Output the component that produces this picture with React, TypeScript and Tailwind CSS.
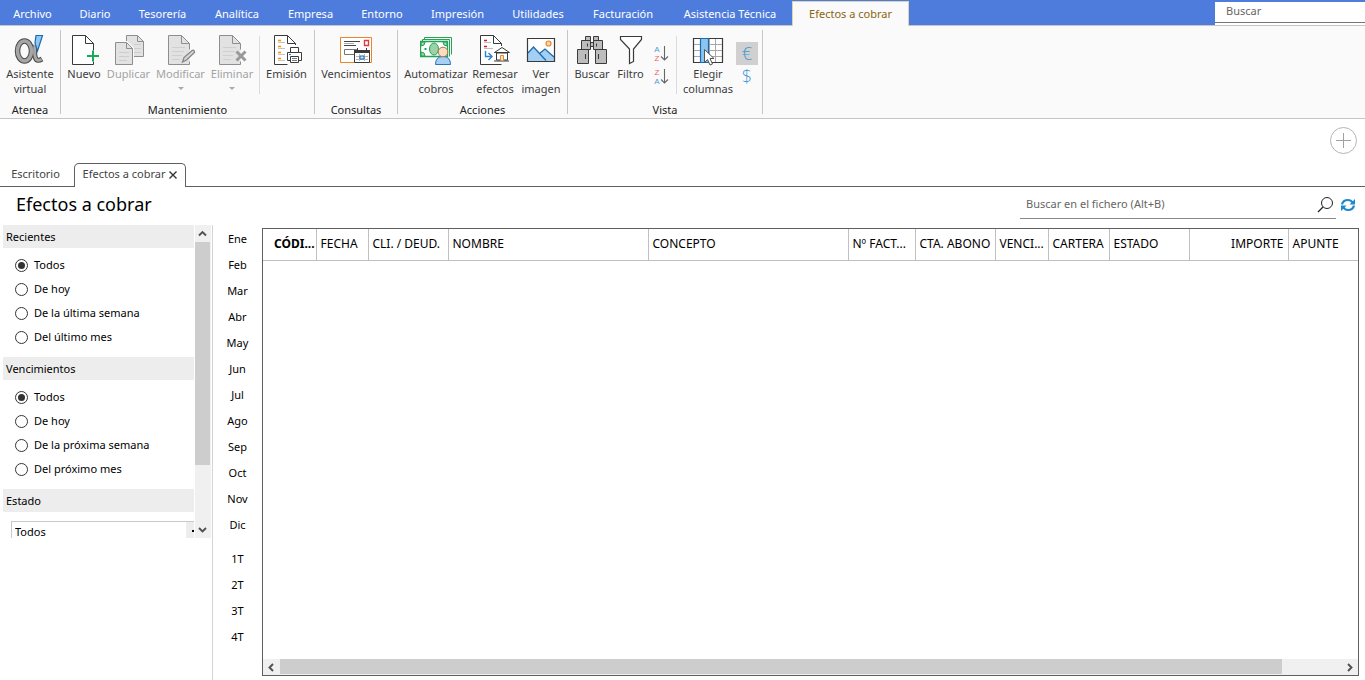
import { useState } from 'react'
import type { ReactNode } from 'react'
import { clsx } from 'clsx'

const menuTabs = [
  { label: 'Archivo', width: 'w-[65px]' },
  { label: 'Diario', width: 'w-[60px]' },
  { label: 'Tesorería', width: 'w-[75px]' },
  { label: 'Analítica', width: 'w-[74px]' },
  { label: 'Empresa', width: 'w-[73px]' },
  { label: 'Entorno', width: 'w-[70px]' },
  { label: 'Impresión', width: 'w-[81px]' },
  { label: 'Utilidades', width: 'w-[80px]' },
  { label: 'Facturación', width: 'w-[90px]' },
  { label: 'Asistencia Técnica', width: 'w-[124px]' },
  { label: 'Efectos a cobrar', width: 'w-[117px]' },
]

const months = ['Ene', 'Feb', 'Mar', 'Abr', 'May', 'Jun', 'Jul', 'Ago', 'Sep', 'Oct', 'Nov', 'Dic']
const quarters = ['1T', '2T', '3T', '4T']

const columns = [
  { label: 'CÓDI...', width: 'w-[53px]', style: 'pl-[11px] text-left font-bold' },
  { label: 'FECHA', width: 'w-[52px]', style: 'pl-1 text-left font-normal' },
  { label: 'CLI. / DEUD.', width: 'w-[80px]', style: 'pl-1 text-left font-normal' },
  { label: 'NOMBRE', width: 'w-[200px]', style: 'pl-1 text-left font-normal' },
  { label: 'CONCEPTO', width: 'w-[200px]', style: 'pl-1 text-left font-normal' },
  { label: 'Nº FACT...', width: 'w-[67px]', style: 'pl-1 text-left font-normal' },
  { label: 'CTA. ABONO', width: 'w-[80px]', style: 'pl-1 text-left font-normal' },
  { label: 'VENCI...', width: 'w-[53px]', style: 'pl-1 text-left font-normal' },
  { label: 'CARTERA', width: 'w-[61px]', style: 'pl-1 text-left font-normal' },
  { label: 'ESTADO', width: 'w-[80px]', style: 'pl-1 text-left font-normal' },
  { label: 'IMPORTE', width: 'w-[99px]', style: 'pr-1 text-right font-normal' },
  { label: 'APUNTE', width: '', style: 'pl-1 text-left font-normal' },
]

/* Ribbon icons, all on a 32x32 grid */

function Icon({ children }: { children: ReactNode }) {
  return (
    <svg viewBox="0 0 32 32" className="h-8 w-8 shrink-0" fill="none" aria-hidden="true">
      {children}
    </svg>
  )
}

function AteneaIcon() {
  return (
    <Icon>
      <g stroke="#4a4a4a">
        <ellipse cx="10.500" cy="17" rx="7" ry="10" strokeWidth="5.500" />
        <path d="M21 11q-1 9 .5 13t6.500 1" strokeWidth="5" />
      </g>
      <g stroke="#a6a6a6">
        <ellipse cx="10.500" cy="17" rx="7" ry="10" strokeWidth="3.500" />
        <path d="M21 11q-1 9 .5 13t6 1.200" strokeWidth="3" />
      </g>
      <path d="M22 1.500h6.500l-5 15.500-2.500-8z" fill="#8fc8f2" stroke="#1b6bb0" strokeWidth="1.200" />
    </Icon>
  )
}

function NewIcon() {
  return (
    <Icon>
      <path d="M25.5 16.5v-7l-8-8h-13v29h21v-3" fill="#fff" />
      <path d="M25.5 16.5v-7l-8-8h-13v29h21v-3M17.5 1.5v8h8" stroke="#3a3a3a" />
      <path d="M25 16.5v11M19 22h12" stroke="#1aaa55" strokeWidth="2" />
    </Icon>
  )
}

function DuplicateIcon() {
  return (
    <Icon>
      <path d="M13.500 1.500h11l6 6v15h-17z" fill="#e2e2e2" stroke="#8e8e8e" />
      <path d="M24.500 1.500v6h6" stroke="#8e8e8e" />
      <path d="M21 10.500h7M21 14.500h7M21 18.500h7" stroke="#cdcdcd" />
      <path d="M1 7h13l7 7v10H1z" fill="#fafafa" />
      <path d="M2.500 8.500h11l6 6v16h-17z" fill="#e2e2e2" stroke="#8e8e8e" />
      <path d="M13.500 8.500v6h6" stroke="#8e8e8e" />
      <path d="M6 18.500h10M6 22.500h10M6 26.500h8" stroke="#cdcdcd" />
    </Icon>
  )
}

function DisabledPage() {
  return (
    <>
      <path d="M3.500 1.500h13l8 8v21h-21z" fill="#e2e2e2" />
      <path d="M24.500 15.500v-6l-8-8h-13v29h21v-3M16.500 1.500v8h8" stroke="#8e8e8e" />
      <path d="M7 13.500h13M7 17.500h12M7 21.500h10M7 25.500h8" stroke="#cfcfcf" />
    </>
  )
}

function EditIcon() {
  return (
    <Icon>
      <DisabledPage />
      <path d="M17.500 28l1.500-4.500 8-7q2.500-1 2.500 2l-8 7.500z" fill="#d6d6d6" stroke="#858585" strokeWidth="1.300" />
    </Icon>
  )
}

function DeleteIcon() {
  return (
    <Icon>
      <DisabledPage />
      <path d="M20.500 17.500l9 9M29.500 17.500l-9 9" stroke="#999" strokeWidth="3" />
    </Icon>
  )
}

function PrintListIcon() {
  return (
    <Icon>
      <path d="M24.500 11V9.500l-8-8h-13v29h13M16.500 1.500v8h8" fill="#fff" stroke="#3a3a3a" />
      <path d="M7 6.500h3M7 12.500h3M7 18.500h3M7 24.500h3" stroke="#f29111" strokeWidth="1.500" />
      <path d="M7 8.500h7M7 14.500h7M7 20.500h7M7 26.500h7" stroke="#c4c4c4" />
      <path d="M16.500 18.500h14v8h-14z" fill="#fff" stroke="#3a3a3a" />
      <path d="M19.500 13.500h8v5h-8zM19.500 22.500h8v6h-8z" fill="#fff" stroke="#3a3a3a" />
      <path d="M21 24.500h5M21 26.500h5" stroke="#777" />
      <path d="M18 20.500h2" stroke="#1b7bd0" />
    </Icon>
  )
}

function DueIcon() {
  return (
    <Icon>
      <path d="M.5 3.500h31v25H.5z" fill="#fff" stroke="#e8862a" />
      <path d="M4 7.500h16M4 11.500h12" stroke="#444" strokeWidth="1.200" />
      <path d="M4 9.500h10" stroke="#aaa" />
      <path d="M24.500 6.500h4v5h-4z" stroke="#e23b3b" strokeWidth="1.400" />
      <path d="M4.500 15.500h12v5h-12z" stroke="#777" />
      <path d="M14.500 16.500h15v12h-15z" fill="#fff" stroke="#3a3a3a" />
      <path d="M14 16h16v3H14z" fill="#3a3a3a" />
      <path d="M17.500 14v3M26.500 14v3" stroke="#3a3a3a" />
      <path d="M16 22.500h12M16 25.500h12M19.500 20v7M24.500 20v7" stroke="#b5b5b5" />
      <path d="M20 22h4v3h-4z" fill="#cfe6fa" stroke="#1b6bb0" />
    </Icon>
  )
}

function CollectIcon() {
  return (
    <Icon>
      <path d="M4.500 5V3.500h27v17M2.500 7V5.500h27v17" stroke="#21a453" />
      <path d="M.5 7.500h27v15H.5z" fill="#fff" stroke="#21a453" strokeWidth="1.300" />
      <path d="M1 8h4q0 4-4 4zM27 8h-4q0 4 4 4zM1 22h4q0-4-4-4z" fill="#9bd2a9" stroke="#21a453" />
      <ellipse cx="14" cy="15" rx="4.500" ry="6" fill="#9bd2a9" stroke="#21a453" />
      <path d="M5.500 14v2" stroke="#21a453" strokeWidth="2" />
      <path d="M15.500 30.500q0-8 7.500-8t7.500 8z" fill="#a6d0f3" stroke="#2d75b5" />
      <circle cx="23" cy="18" r="4.800" fill="#fcdcc0" stroke="#a97450" />
    </Icon>
  )
}

function RemitIcon() {
  return (
    <Icon>
      <path d="M22.500 12V9.500l-8-8h-13v29h21M14.500 1.500v8h8" fill="#fff" stroke="#3a3a3a" />
      <path d="M5 6.500h3M5 12.500h3" stroke="#d0142c" strokeWidth="1.400" />
      <path d="M5 8.500h7M5 14.500h9" stroke="#bdbdbd" />
      <path d="M6.500 17v5.500h6M9.500 19l3.500 3.500L9.500 26" stroke="#2a84d0" strokeWidth="1.400" />
      <path d="M17.500 19h11v7h-11z" fill="#fff" stroke="#3a3a3a" />
      <path d="M15.500 18.500l7.500-5 7.500 5zM15 27h15" fill="#fff" stroke="#3a3a3a" />
      <path d="M21.500 26.500v-5h3v5" fill="#ffe3c2" stroke="#e8862a" />
    </Icon>
  )
}

function ImageIcon() {
  return (
    <Icon>
      <path d="M2.500 4.500h27v23h-27z" fill="#fff" />
      <path d="M3 19l5.500-6 6 6.500 5.500-4.500 9 8v4H3z" fill="#a3d0f2" />
      <path d="M3 19l5.500-6L21 26.500M14.500 19.500l5.500-4.500 9 8" stroke="#1b6bb0" strokeWidth="1.300" />
      <circle cx="23.500" cy="9.500" r="2.500" fill="#ffd8ae" stroke="#ec8425" strokeWidth="1.200" />
      <path d="M2.500 4.500h27v23h-27z" stroke="#3a3a3a" strokeWidth="1.200" />
    </Icon>
  )
}

function BinocularsIcon() {
  return (
    <Icon>
      <g fill="#bdbdbd" stroke="#3a3a3a">
        <path d="M9.500 2.500h5v4h-5zM17.500 2.500h5v4h-5z" />
        <path d="M14.500 8.500h3v4h-3z" />
        <path d="M5.500 6.500h9v9h-9zM17.500 6.500h9v9h-9z" />
        <path d="M1.500 15.500h11v14h-11zM19.500 15.500h11v14h-11z" />
      </g>
      <path d="M11.500 9.500v3M20.500 9.500v3M9.500 20v5M22.500 20v5" stroke="#3a3a3a" />
    </Icon>
  )
}

function FunnelIcon() {
  return (
    <Icon>
      <path d="M5.500 2.500h21v3l-8 9.500v12.500l-4 2V15l-9-9.500z" fill="#fff" stroke="#3a3a3a" strokeWidth="1.200" />
    </Icon>
  )
}

function ColumnsIcon() {
  return (
    <Icon>
      <path d="M1.500 4.500h29v24h-29z" fill="#fff" />
      <path d="M1 10.500h30M1 16.500h30M1 22.500h30M17.500 4v25M23.500 4v25" stroke="#a8a8a8" />
      <path d="M1.500 4.500h29v24h-29z" stroke="#3a3a3a" strokeWidth="1.200" />
      <path d="M8.500 4.500h8v24h-8z" fill="#8cc6f0" stroke="#1b6bb0" strokeWidth="1.200" />
      <path d="M12.500 15.500v13l3-3 2.500 5.500 2.500-1-2.500-5.500h4z" fill="#fff" stroke="#555" />
    </Icon>
  )
}

function SortIcon({ first, second }: { first: string; second: string }) {
  const color = (letter: string) => (letter === 'A' ? '#4a9fd8' : '#ef6060')
  return (
    <svg viewBox="0 0 16 20" className="h-5 w-4" fill="none" aria-hidden="true">
      <g fontFamily="Liberation Sans, sans-serif" fontSize="8" textAnchor="middle">
        <text x="4" y="8" fill={color(first)}>{first}</text>
        <text x="4" y="17" fill={color(second)}>{second}</text>
      </g>
      <path d="M11.500 2v14M8 12.500l3.500 3.500 3.500-3.500" stroke="#666" strokeWidth="1.100" />
    </svg>
  )
}

interface RibbonButtonProps {
  label: string
  second?: string
  width: string
  disabled?: boolean
  menu?: boolean
  children: ReactNode
}

function RibbonButton({ label, second, width, disabled, menu, children }: RibbonButtonProps) {
  return (
    <button
      disabled={disabled}
      className={clsx('flex flex-col items-center pt-2 leading-[15px] whitespace-nowrap', width, disabled ? 'text-[#a3a3a3]' : 'text-[#3c3c3c]')}
    >
      {children}
      <span>{label}</span>
      {second && <span>{second}</span>}
      {menu && (
        <svg viewBox="0 0 6 3" className="mt-1.5 h-[3px] w-1.5" aria-hidden="true">
          <path d="M0 0h6L3 3z" fill="#a9a9a9" />
        </svg>
      )}
    </button>
  )
}

function RibbonGroup({ title, padding, children }: { title: string; padding?: string; children: ReactNode }) {
  return (
    <section className="flex">
      <div className="flex flex-col">
        <div className={clsx('flex h-[76px]', padding)}>{children}</div>
        <h2 className="text-center leading-4 text-[#222]">{title}</h2>
      </div>
      <div className="my-1 w-px bg-[#c6c6c6]" />
    </section>
  )
}

function InnerSeparator() {
  return <div className="mx-[3px] mt-2.5 mb-2 w-px bg-[#dcdcdc]" />
}

function Chevron({ d }: { d: string }) {
  return (
    <svg viewBox="0 0 9 9" className="h-[9px] w-[9px]" fill="none" aria-hidden="true">
      <path d={d} stroke="#505050" strokeWidth="1.900" />
    </svg>
  )
}

function RadioGroup({ title, name, options }: { title: string; name: string; options: string[] }) {
  const [value, setValue] = useState(options[0])
  return (
    <fieldset className="pb-2">
      <legend className="h-[23px] w-full bg-[#ededed] pl-[3px] leading-6">{title}</legend>
      <div className="pt-[5px]">
        {options.map((option) => (
          <label key={option} className="flex h-6 items-center gap-1.5 pl-3">
            <input
              type="radio"
              name={name}
              checked={value === option}
              onChange={() => setValue(option)}
              className="grid size-[13px] appearance-none place-content-center rounded-full border border-[#333] before:size-[7px] before:rounded-full checked:before:bg-[#333]"
            />
            {option}
          </label>
        ))}
      </div>
    </fieldset>
  )
}

function Ribbon() {
  return (
    <div className="flex h-[93px] border-b border-[#c6c6c6] bg-[#fafafa]">
      <RibbonGroup title="Atenea">
        <RibbonButton label="Asistente" second="virtual" width="w-[60px]"><AteneaIcon /></RibbonButton>
      </RibbonGroup>
      <RibbonGroup title="Mantenimiento" padding="pl-[3px] pr-1">
        <RibbonButton label="Nuevo" width="w-[40px]"><NewIcon /></RibbonButton>
        <RibbonButton label="Duplicar" width="w-[49px]" disabled><DuplicateIcon /></RibbonButton>
        <RibbonButton label="Modificar" width="w-[55px]" disabled menu><EditIcon /></RibbonButton>
        <RibbonButton label="Eliminar" width="w-[48px]" disabled menu><DeleteIcon /></RibbonButton>
        <InnerSeparator />
        <RibbonButton label="Emisión" width="w-[47px]"><PrintListIcon /></RibbonButton>
      </RibbonGroup>
      <RibbonGroup title="Consultas">
        <RibbonButton label="Vencimientos" width="w-[82px]"><DueIcon /></RibbonButton>
      </RibbonGroup>
      <RibbonGroup title="Acciones" padding="pl-1 pr-[5px]">
        <RibbonButton label="Automatizar" second="cobros" width="w-[68px]"><CollectIcon /></RibbonButton>
        <RibbonButton label="Remesar" second="efectos" width="w-[50px]"><RemitIcon /></RibbonButton>
        <RibbonButton label="Ver" second="imagen" width="w-[42px]"><ImageIcon /></RibbonButton>
      </RibbonGroup>
      <RibbonGroup title="Vista" padding="px-1">
        <RibbonButton label="Buscar" width="w-[40px]"><BinocularsIcon /></RibbonButton>
        <RibbonButton label="Filtro" width="w-[37px]"><FunnelIcon /></RibbonButton>
        <div className="flex w-6 flex-col items-center gap-[3px] pt-[18px]">
          <button aria-label="Orden ascendente"><SortIcon first="A" second="Z" /></button>
          <button aria-label="Orden descendente"><SortIcon first="Z" second="A" /></button>
        </div>
        <InnerSeparator />
        <RibbonButton label="Elegir" second="columnas" width="w-[56px]"><ColumnsIcon /></RibbonButton>
        <div className="flex w-[22px] flex-col pt-4 font-['Open_Sans',sans-serif] text-lg font-light text-[#3f97d3]">
          <button className="h-[23px] bg-[#d0d0d0] leading-[23px]">€</button>
          <button className="h-[23px] leading-[23px]">$</button>
        </div>
      </RibbonGroup>
    </div>
  )
}

function Sidebar() {
  return (
    <aside className="w-[213px] shrink-0 border-r border-[#d4d4d4] pl-[3px]">
      <div className="flex h-[313px] overflow-hidden">
        <div className="w-[191px]">
          <RadioGroup title="Recientes" name="recientes" options={['Todos', 'De hoy', 'De la última semana', 'Del último mes']} />
          <RadioGroup title="Vencimientos" name="vencimientos" options={['Todos', 'De hoy', 'De la próxima semana', 'Del próximo mes']} />
          <label htmlFor="estado" className="block h-[23px] bg-[#ededed] pl-[3px] leading-6">Estado</label>
          <div className="mt-[9px] ml-2 flex h-[22px] overflow-hidden border-t border-l border-[#c9c9c9]">
            <select id="estado" className="min-w-0 flex-1 appearance-none bg-white pl-[3px]">
              <option>Todos</option>
            </select>
            <span className="flex w-2 shrink-0 justify-end bg-[#ededed] pt-2">
              <span className="h-0.5 w-0.5 bg-black" />
            </span>
          </div>
        </div>
        <div className="ml-px flex w-4 flex-col bg-[#f0f0f0] pr-px">
          <div className="flex h-[17px] items-center justify-center"><Chevron d="M1 6.500L4.500 3 8 6.500" /></div>
          <div className="flex-1">
            <div className="h-4/5 bg-[#cdcdcd]" />
          </div>
          <div className="flex h-[17px] items-center justify-center"><Chevron d="M1 3l3.500 3.500L8 3" /></div>
        </div>
      </div>
    </aside>
  )
}

function Periods() {
  return (
    <nav className="flex w-[49px] shrink-0 flex-col pt-px">
      {months.map((month) => (
        <button key={month} className="h-[26px]">{month}</button>
      ))}
      <div className="flex flex-col pt-2">
        {quarters.map((quarter) => (
          <button key={quarter} className="h-[26px]">{quarter}</button>
        ))}
      </div>
    </nav>
  )
}

function EffectsTable() {
  return (
    <div className="mt-[3px] mr-1.5 mb-1 flex min-w-0 flex-1 flex-col border border-[#5f5f5f]">
      <table className="w-full table-fixed border-collapse text-xs">
        <thead>
          <tr className="h-[31px] border-b border-[#c0c0c0]">
            {columns.map((column) => (
              <th
                key={column.label}
                className={clsx('overflow-hidden border-r border-[#c0c0c0] whitespace-nowrap last:border-r-0', column.width, column.style)}
              >
                {column.label}
              </th>
            ))}
          </tr>
        </thead>
        <tbody />
      </table>
      <div className="mt-auto flex h-4 bg-[#f0f0f0]">
        <div className="flex w-[17px] items-center justify-center"><Chevron d="M6 1L2.500 4.500 6 8" /></div>
        <div className="flex-1 pr-[59px]">
          <div className="h-[15px] bg-[#cdcdcd]" />
        </div>
        <div className="flex w-[17px] items-center justify-center"><Chevron d="M3 1l3.500 3.500L3 8" /></div>
      </div>
    </div>
  )
}

export default function App() {
  const [activeTab, setActiveTab] = useState('Efectos a cobrar')

  return (
    <div className="flex min-h-screen flex-col bg-white font-['Noto_Sans',sans-serif] text-[11px] text-black">
      {/* Menu bar */}
      <header className="flex h-[26px] justify-between border-b border-[#c6c6c6] bg-[#4e7cdc]">
        <nav className="flex">
          {menuTabs.map((tab) => (
            <button
              key={tab.label}
              onClick={() => setActiveTab(tab.label)}
              className={clsx(
                'whitespace-nowrap',
                tab.width,
                tab.label === activeTab ? 'mt-px -mb-px border-x border-t border-[#d9d3b8] bg-[#fafafa] text-[#8a6510]' : 'pt-[3px] text-white'
              )}
            >
              {tab.label}
            </button>
          ))}
        </nav>
        <div className="mt-0.5 w-[150px] bg-white">
          <input type="search" aria-label="Buscar" placeholder="Buscar" className="h-[21px] w-full border-b border-[#777] px-[11px] pb-[3px] outline-none placeholder:text-[#666]" />
        </div>
      </header>

      <Ribbon />

      {/* Open windows */}
      <div className="flex items-end justify-between border-b border-[#5f5f5f]">
        <div className="flex pt-11">
          <button className="w-[74px] pr-[3px] text-[#444]">Escritorio</button>
          <div className="-mb-px flex h-6 w-[112px] items-center justify-center gap-1 rounded-t-[5px] border border-b-0 border-[#5f5f5f] bg-white pb-0.5">
            <button className="whitespace-nowrap text-[#444]">Efectos a cobrar</button>
            <button aria-label="Cerrar">
              <svg viewBox="0 0 8 8" className="h-2 w-2" aria-hidden="true">
                <path d="M.5.5l7 7M7.500.5l-7 7" stroke="#333" strokeWidth="1.400" />
              </svg>
            </button>
          </div>
        </div>
        <button aria-label="Añadir" className="mt-2 mr-2 self-start">
          <svg viewBox="0 0 27 27" className="h-[27px] w-[27px]" fill="none" aria-hidden="true">
            <circle cx="13.500" cy="13.500" r="13" stroke="#b4b4b4" />
            <path d="M13.500 6v15M6 13.500h15" stroke="#a0a0a0" />
          </svg>
        </button>
      </div>

      {/* Title and file search */}
      <div className="flex h-[38px] items-start justify-between pr-[9px] pl-4">
        <h1 className="text-lg leading-[34px]">Efectos a cobrar</h1>
        <div className="flex items-center gap-1">
          <div className="mt-1 flex h-7 w-[316px] items-center border-b border-[#8a8a8a] pr-0.5">
            <input type="search" aria-label="Buscar en el fichero" placeholder="Buscar en el fichero (Alt+B)" className="min-w-0 flex-1 pl-1.5 outline-none placeholder:text-[#666]" />
            <svg viewBox="0 0 17 17" className="h-[17px] w-[17px]" fill="none" aria-hidden="true">
              <circle cx="10" cy="7" r="5.500" stroke="#222" />
              <path d="M6 11l-5 5" stroke="#222" strokeWidth="1.200" />
            </svg>
          </div>
          <button aria-label="Actualizar" className="mt-1">
            <svg viewBox="0 0 16 16" className="h-4 w-4" fill="none" aria-hidden="true">
              <path d="M2 7.500Q3 3 8 3q3 0 4.500 2.500M14 8.500Q13 13 8 13q-3 0-4.500-2.500" stroke="#1e88cf" strokeWidth="2.200" />
              <path d="M15 2v5.500H9.500zM1 14V8.500h5.500z" fill="#1e88cf" />
            </svg>
          </button>
        </div>
      </div>

      <main className="flex flex-1">
        <Sidebar />
        <Periods />
        <EffectsTable />
      </main>
    </div>
  )
}
